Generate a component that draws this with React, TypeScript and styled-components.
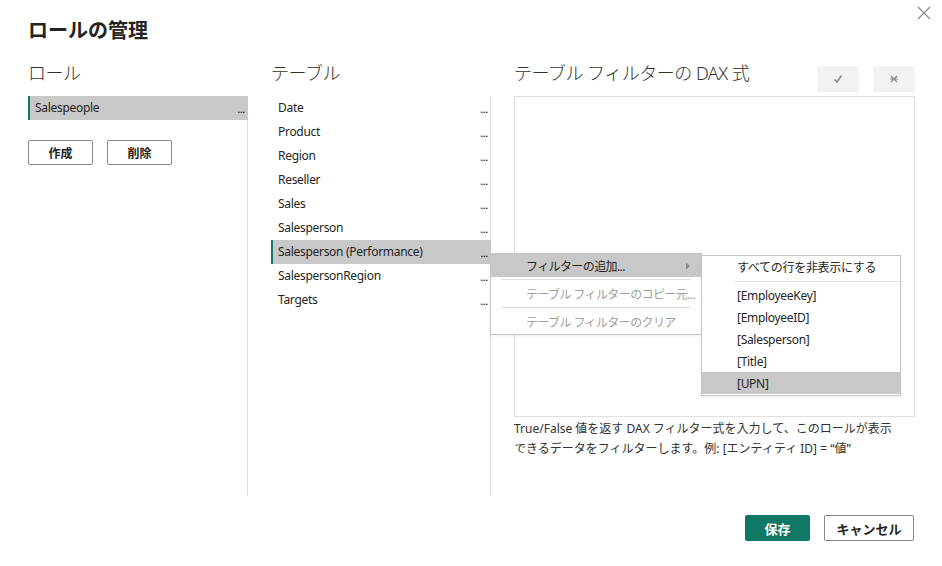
import styled, { createGlobalStyle } from "styled-components";

const Global = createGlobalStyle`
  html, body {
    margin: 0;
    padding: 0;
    background: #ffffff;
  }
  body {
    font-family: "Noto Sans", "Noto Sans CJK JP", sans-serif;
    color: #252423;
  }
`;

const tables = [
  "Date",
  "Product",
  "Region",
  "Reseller",
  "Sales",
  "Salesperson",
  "Salesperson (Performance)",
  "SalespersonRegion",
  "Targets",
];

const columns = ["[EmployeeKey]", "[EmployeeID]", "[Salesperson]", "[Title]", "[UPN]"];

const App = () => {
  return (
    <Dialog>
      <Global />
      <CloseButton aria-label="close">
        <svg width="14" height="14" viewBox="0 0 14 14">
          <path d="M1 1 L13 13 M13 1 L1 13" stroke="#8a8886" strokeWidth="1.1" fill="none" />
        </svg>
      </CloseButton>
      <Title>ロールの管理</Title>

      <Columns>
        <Column>
          <Heading>ロール</Heading>
          <List>
            <Row $selected>
              <span>Salespeople</span>
              <Dots>...</Dots>
            </Row>
            <ButtonRow>
              <Button>作成</Button>
              <Button>削除</Button>
            </ButtonRow>
          </List>
        </Column>

        <Column>
          <Heading>テーブル</Heading>
          <List>
            {tables.map((t) => (
              <Row key={t} $selected={t === "Salesperson (Performance)"}>
                <span>{t}</span>
                <Dots>...</Dots>
              </Row>
            ))}
          </List>
        </Column>

        <Column>
          <HeadRow>
            <Heading>テーブル フィルターの DAX 式</Heading>
            <IconButtons>
              <IconButton aria-label="commit">
                <svg width="10" height="10" viewBox="0 0 10 10">
                  <path d="M1.5 5.5 L4 8 L8.5 1.5" stroke="#8a8886" strokeWidth="1.6" fill="none" />
                </svg>
              </IconButton>
              <IconButton aria-label="discard">
                <svg width="10" height="10" viewBox="0 0 10 10">
                  <path d="M2 2 L8 8 M8 2 L2 8 M1 5 L9 5" stroke="#8a8886" strokeWidth="1.2" fill="none" />
                </svg>
              </IconButton>
            </IconButtons>
          </HeadRow>
          <Editor />
          <Hint>
            True/False 値を返す DAX フィルター式を入力して、このロールが表示
            <br />
            できるデータをフィルターします。例: [エンティティ ID] = “値”
          </Hint>
        </Column>
      </Columns>

      <Footer>
        <FooterButton $primary $width={65}>保存</FooterButton>
        <FooterButton $width={90}>キャンセル</FooterButton>
      </Footer>

      <Menu>
        <MenuItem $active $tall>
          <span>フィルターの追加...</span>
          <svg width="6" height="8" viewBox="0 0 6 8">
            <path d="M1 0.5 L5 4 L1 7.5 Z" fill="#8a8886" />
          </svg>
        </MenuItem>
        <MenuSep />
        <MenuItem $disabled>テーブル フィルターのコピー元...</MenuItem>
        <MenuSep />
        <MenuItem $disabled>テーブル フィルターのクリア</MenuItem>
      </Menu>

      <SubMenu>
        <SubItem>すべての行を非表示にする</SubItem>
        <SubSep />
        {columns.map((c) => (
          <SubItem key={c} $active={c === "[UPN]"}>
            {c}
          </SubItem>
        ))}
      </SubMenu>
    </Dialog>
  );
};

export default App;

const Dialog = styled.div`
  position: relative;
  width: 942px;
  height: 566px;
  box-sizing: border-box;
  padding: 17px 27px 0 28px;
  background: #ffffff;
  overflow: hidden;
`;

const CloseButton = styled.div`
  position: absolute;
  top: 6px;
  right: 11px;
  width: 14px;
  height: 14px;
  display: flex;
`;

const Title = styled.h1`
  margin: 0;
  font-size: 20px;
  line-height: 28px;
  font-weight: 700;
  color: #252423;
`;

const Columns = styled.div`
  display: grid;
  grid-template-columns: 220px 220px 401px;
  column-gap: 23px;
  margin-top: 16px;
`;

const Column = styled.div`
  display: flex;
  flex-direction: column;
`;

const Heading = styled.div`
  font-size: 18px;
  line-height: 24px;
  font-weight: 300;
  letter-spacing: -0.5px;
  color: #323130;
  height: 35px;
`;

const HeadRow = styled.div`
  display: flex;
  justify-content: space-between;
  align-items: flex-start;
`;

const IconButtons = styled.div`
  display: flex;
  gap: 14px;
  margin-top: 5px;
`;

const IconButton = styled.div`
  width: 42px;
  height: 26px;
  border-radius: 3px;
  background: #f3f2f1;
  display: flex;
  align-items: center;
  justify-content: center;
`;

const List = styled.div`
  height: 400px;
  border-right: 1px solid #e1dfdd;
  display: flex;
  flex-direction: column;
`;

const Row = styled.div<{ $selected?: boolean }>`
  height: 24px;
  margin-right: -1px;
  box-sizing: border-box;
  display: flex;
  align-items: center;
  justify-content: space-between;
  padding: 0 3px 1px ${(p) => (p.$selected ? "5px" : "7px")};
  border-left: ${(p) => (p.$selected ? "2px solid #117865" : "none")};
  background: ${(p) => (p.$selected ? "#c8c8c8" : "transparent")};
  font-size: 12px;
  letter-spacing: -0.3px;
  color: #252423;
  white-space: nowrap;
`;

const Dots = styled.span`
  font-size: 9px;
  font-weight: 700;
  letter-spacing: 0;
  color: #252423;
  margin-top: 3px;
`;

const ButtonRow = styled.div`
  display: flex;
  gap: 14px;
  margin-top: 20px;
`;

const Button = styled.div`
  width: 65px;
  height: 25px;
  box-sizing: border-box;
  border: 1px solid #8a8886;
  border-radius: 2px;
  display: flex;
  align-items: center;
  justify-content: center;
  font-size: 12px;
  font-weight: 700;
  color: #252423;
`;

const Editor = styled.div`
  height: 321px;
  box-sizing: border-box;
  border: 1px solid #e1dfdd;
`;

const Hint = styled.div`
  margin-top: 2px;
  font-size: 12px;
  line-height: 20px;
  color: #323130;
`;

const Footer = styled.div`
  display: flex;
  justify-content: flex-end;
  gap: 14px;
  margin-top: 19px;
  padding-right: 1px;
`;

const FooterButton = styled.div<{ $primary?: boolean; $width: number }>`
  width: ${(p) => p.$width}px;
  height: 26px;
  box-sizing: border-box;
  border-radius: 2px;
  border: 1px solid ${(p) => (p.$primary ? "#117865" : "#8a8886")};
  background: ${(p) => (p.$primary ? "#117865" : "#ffffff")};
  color: ${(p) => (p.$primary ? "#ffffff" : "#252423")};
  font-size: 13px;
  font-weight: 700;
  display: flex;
  align-items: center;
  justify-content: center;
`;

const Menu = styled.div`
  position: absolute;
  left: 490px;
  top: 253px;
  width: 212px;
  box-sizing: border-box;
  padding: 0 0 1px;
  background: #ffffff;
  border: 1px solid #c8c6c4;
  box-shadow: 0 1px 3px rgba(0, 0, 0, 0.08);
`;

const MenuItem = styled.div<{ $active?: boolean; $disabled?: boolean; $tall?: boolean }>`
  height: ${(p) => (p.$tall ? "23px" : "22px")};
  display: flex;
  align-items: center;
  justify-content: space-between;
  padding: 0 10px 0 35px;
  background: ${(p) => (p.$active ? "#c8c8c8" : "transparent")};
  color: ${(p) => (p.$disabled ? "#a19f9d" : "#252423")};
  font-size: 12px;
  letter-spacing: -0.6px;
  white-space: nowrap;
`;

const MenuSep = styled.div`
  height: 1px;
  margin: 2px 10px 3px;
  background: #e1dfdd;
`;

const SubMenu = styled.div`
  position: absolute;
  left: 701px;
  top: 255px;
  width: 200px;
  box-sizing: border-box;
  padding: 0 0 1px;
  background: #ffffff;
  border: 1px solid #c8c6c4;
  box-shadow: 0 1px 3px rgba(0, 0, 0, 0.08);
`;

const SubItem = styled.div<{ $active?: boolean }>`
  height: 22px;
  display: flex;
  align-items: center;
  padding-left: 35px;
  background: ${(p) => (p.$active ? "#c8c8c8" : "transparent")};
  color: #252423;
  font-size: 12px;
  letter-spacing: -0.3px;
  white-space: nowrap;
`;

const SubSep = styled.div`
  height: 1px;
  margin: 3px 0 2px 33px;
  background: #e1dfdd;
`;
